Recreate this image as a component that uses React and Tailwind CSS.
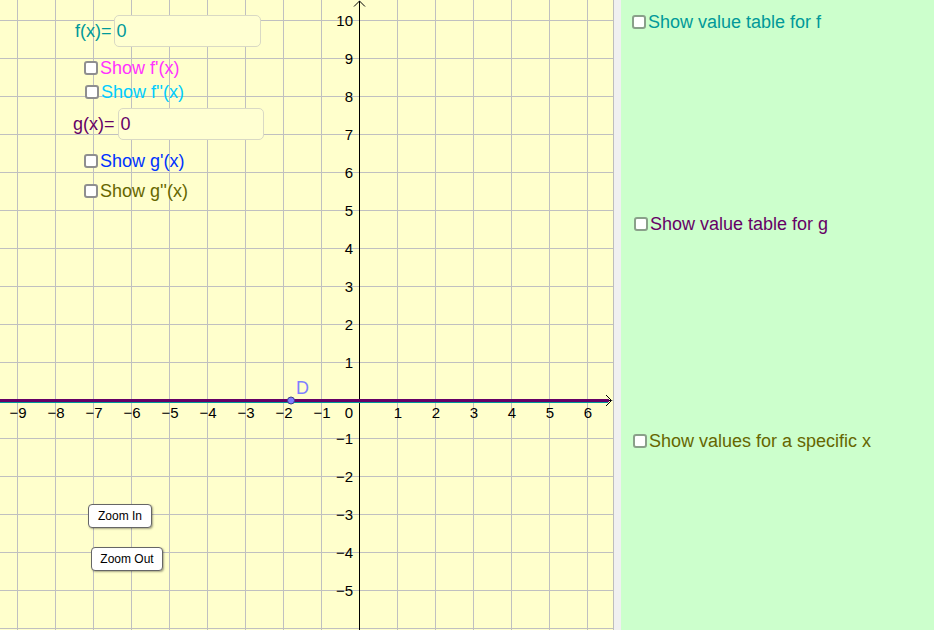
import React from "react";

const FONT = "font-['Liberation_Sans',Arial,sans-serif]";

function Box({ green }) {
  return (
    <span
      className={
        "inline-block w-[14px] h-[14px] shrink-0 rounded-[3px] bg-white border-2 " +
        (green ? "border-[#8aa08a]" : "border-[#8f8f8f]")
      }
    />
  );
}

function Check({ label, color, green }) {
  return (
    <div className={"flex items-center gap-[2px] text-[18px] leading-[20px] whitespace-nowrap " + FONT} style={{ color }}>
      <Box green={green} />
      <span>{label}</span>
    </div>
  );
}

function Graph() {
  const xs = [];
  for (let k = -9; k <= 6; k++) xs.push(359 + 38 * k);
  const ys = [];
  for (let k = -10; k <= 6; k++) ys.push(400 + 38 * k);
  const xLabels = [];
  for (let k = -9; k <= 6; k++) {
    if (k === 0) continue;
    xLabels.push(
      <text key={"x" + k} x={359 + 38 * k + 1} y={418} textAnchor="middle">
        {k < 0 ? "\u2212" + -k : k}
      </text>
    );
  }
  const yLabels = [];
  for (let k = -5; k <= 10; k++) {
    if (k === 0) continue;
    yLabels.push(
      <text key={"y" + k} x={353} y={400 - 38 * k + 6} textAnchor="end">
        {k < 0 ? "\u2212" + -k : k}
      </text>
    );
  }
  return (
    <svg width="613" height="630" className="block" fontFamily="'Liberation Sans', Arial, sans-serif">
      {xs.map((x) => (
        <line key={"gx" + x} x1={x + 0.5} y1={0} x2={x + 0.5} y2={630} stroke="#c0c0c0" strokeWidth="1" />
      ))}
      {ys.map((y) => (
        <line key={"gy" + y} x1={0} y1={y + 0.5} x2={613} y2={y + 0.5} stroke="#c0c0c0" strokeWidth="1" />
      ))}
      <line x1={359.5} y1={1} x2={359.5} y2={630} stroke="#000" strokeWidth="1" />
      <polyline points="354,6.5 359.5,1 365,6.5" fill="none" stroke="#000" strokeWidth="1" />
      <line x1={0} y1={400.5} x2={611} y2={400.5} stroke="#000" strokeWidth="1" />
      <polyline points="606,395 611.5,400.5 606,406" fill="none" stroke="#000" strokeWidth="1" />
      <line x1={0} y1={402.5} x2={608} y2={402.5} stroke="#009999" strokeWidth="1" />
      <line x1={0} y1={400.5} x2={609} y2={400.5} stroke="#660066" strokeWidth="3" />
      <g fontSize="15" fill="#000">
        {xLabels}
        <text x={353} y={418} textAnchor="end">0</text>
        {yLabels}
      </g>
      <circle cx={291} cy={400.5} r={3.5} fill="#7f7fff" stroke="#3c3c8c" strokeWidth="1" />
      <text x={296} y={394} fontSize="18" fill="#7f7fff">D</text>
    </svg>
  );
}

function InputRow({ label, color, top, left, boxLeft, width }) {
  return (
    <div className={"absolute flex items-center h-[32px] text-[18px] " + FONT} style={{ top, left, color }}>
      <span className="leading-[20px]">{label}</span>
      <div
        className="h-[32px] rounded-[5px] border-[1.5px] border-[#d9d9c4] bg-[#ffffd2] flex items-center pl-[2px] leading-[20px]"
        style={{ width, marginLeft: boxLeft }}
      >
        0
      </div>
    </div>
  );
}

function ZBtn({ children, top, left, width }) {
  return (
    <button
      className={
        "absolute h-[24px] rounded-[4px] border border-[#666] bg-white text-[12px] text-black shadow-[1px_1px_2px_rgba(0,0,0,0.35)] flex items-center justify-center " +
        FONT
      }
      style={{ top, left, width }}
    >
      {children}
    </button>
  );
}

export default function App() {
  return (
    <div className={"w-[934px] h-[630px] flex overflow-hidden " + FONT}>
      <div className="relative w-[613px] h-[630px] bg-[#ffffcc] shrink-0">
        <Graph />
        <InputRow label="f(x)=" color="#009999" top={15} left={75} boxLeft={2} width={147} />
        <div className="absolute top-[58px] left-[84px]">
          <Check label="Show f'(x)" color="#ff33ff" />
        </div>
        <div className="absolute top-[82px] left-[85px]">
          <Check label="Show f''(x)" color="#00ccff" />
        </div>
        <InputRow label="g(x)=" color="#660066" top={108} left={73} boxLeft={3} width={146} />
        <div className="absolute top-[151px] left-[84px]">
          <Check label="Show g'(x)" color="#0033ff" />
        </div>
        <div className="absolute top-[181px] left-[84px]">
          <Check label="Show g''(x)" color="#666600" />
        </div>
        <ZBtn top={504} left={88} width={64}>Zoom In</ZBtn>
        <ZBtn top={547} left={91} width={72}>Zoom Out</ZBtn>
      </div>
      <div className="w-px bg-[#bdbdbd] shrink-0" />
      <div className="w-[7px] bg-[#f0f0f0] shrink-0" />
      <div className="flex-1 bg-[#ccffcc] flex flex-col">
        <div className="mt-[12px] ml-[11px]">
          <Check label="Show value table for f" color="#009999" green />
        </div>
        <div className="mt-[182px] ml-[13px]">
          <Check label="Show value table for g" color="#660066" green />
        </div>
        <div className="mt-[197px] ml-[12px]">
          <Check label="Show values for a specific x" color="#666600" green />
        </div>
      </div>
    </div>
  );
}
